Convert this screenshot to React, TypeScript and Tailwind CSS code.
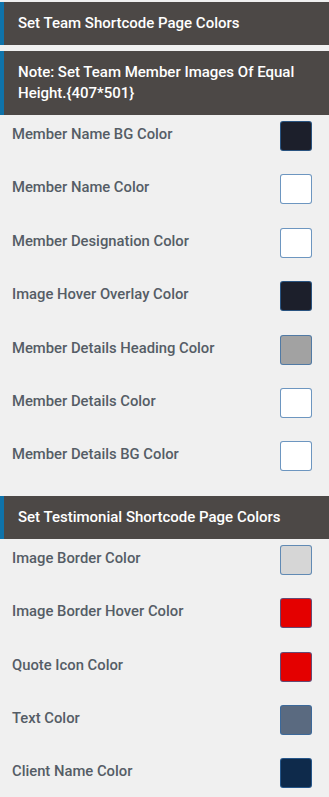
import React from "react";

type Row = { label: string; color: string };

const team: Row[] = [
  { label: "Member Name BG Color", color: "#1c1f2b" },
  { label: "Member Name Color", color: "#ffffff" },
  { label: "Member Designation Color", color: "#ffffff" },
  { label: "Image Hover Overlay Color", color: "#1c1f2b" },
  { label: "Member Details Heading Color", color: "#a2a2a2" },
  { label: "Member Details Color", color: "#ffffff" },
  { label: "Member Details BG Color", color: "#ffffff" },
];

const testimonial: Row[] = [
  { label: "Image Border Color", color: "#d6d6d6" },
  { label: "Image Border Hover Color", color: "#e40000" },
  { label: "Quote Icon Color", color: "#e40000" },
  { label: "Text Color", color: "#5a6a80" },
  { label: "Client Name Color", color: "#0e2a4b" },
];

function Header({ children }: { children: React.ReactNode }) {
  return (
    <div className="border-l-4 border-[#0f73aa] bg-[#4c4846] py-[11px] pl-[14px] pr-3 text-[15px] font-medium leading-[21px] text-white">
      {children}
    </div>
  );
}

function ColorRow({ label, color }: Row) {
  return (
    <div className="flex h-[53.4px] items-start justify-between pl-[12px] pr-[17px]">
      <span className="mt-[9px] text-[14.8px] font-medium leading-[20px] text-[#555d66]">{label}</span>
      <span
        className="mt-[6px] h-[30px] w-[32px] rounded-[3px] border border-[#2f6aa5]/70"
        style={{ backgroundColor: color }}
      />
    </div>
  );
}

export default function App() {
  return (
    <div
      className="min-h-[797px] w-[329px] bg-[#f0f0f0] pt-[2px]"
      style={{ fontFamily: "Roboto, 'Noto Sans', sans-serif" }}
    >
      <Header>Set Team Shortcode Page Colors</Header>
      <div className="h-[6px]" />
      <Header>Note: Set Team Member Images Of Equal Height.{"{407*501}"}</Header>
      {team.map((r) => (
        <ColorRow key={r.label} {...r} />
      ))}
      <div className="h-[7px]" />
      <Header>Set Testimonial Shortcode Page Colors</Header>
      {testimonial.map((r) => (
        <ColorRow key={r.label} {...r} />
      ))}
    </div>
  );
}
